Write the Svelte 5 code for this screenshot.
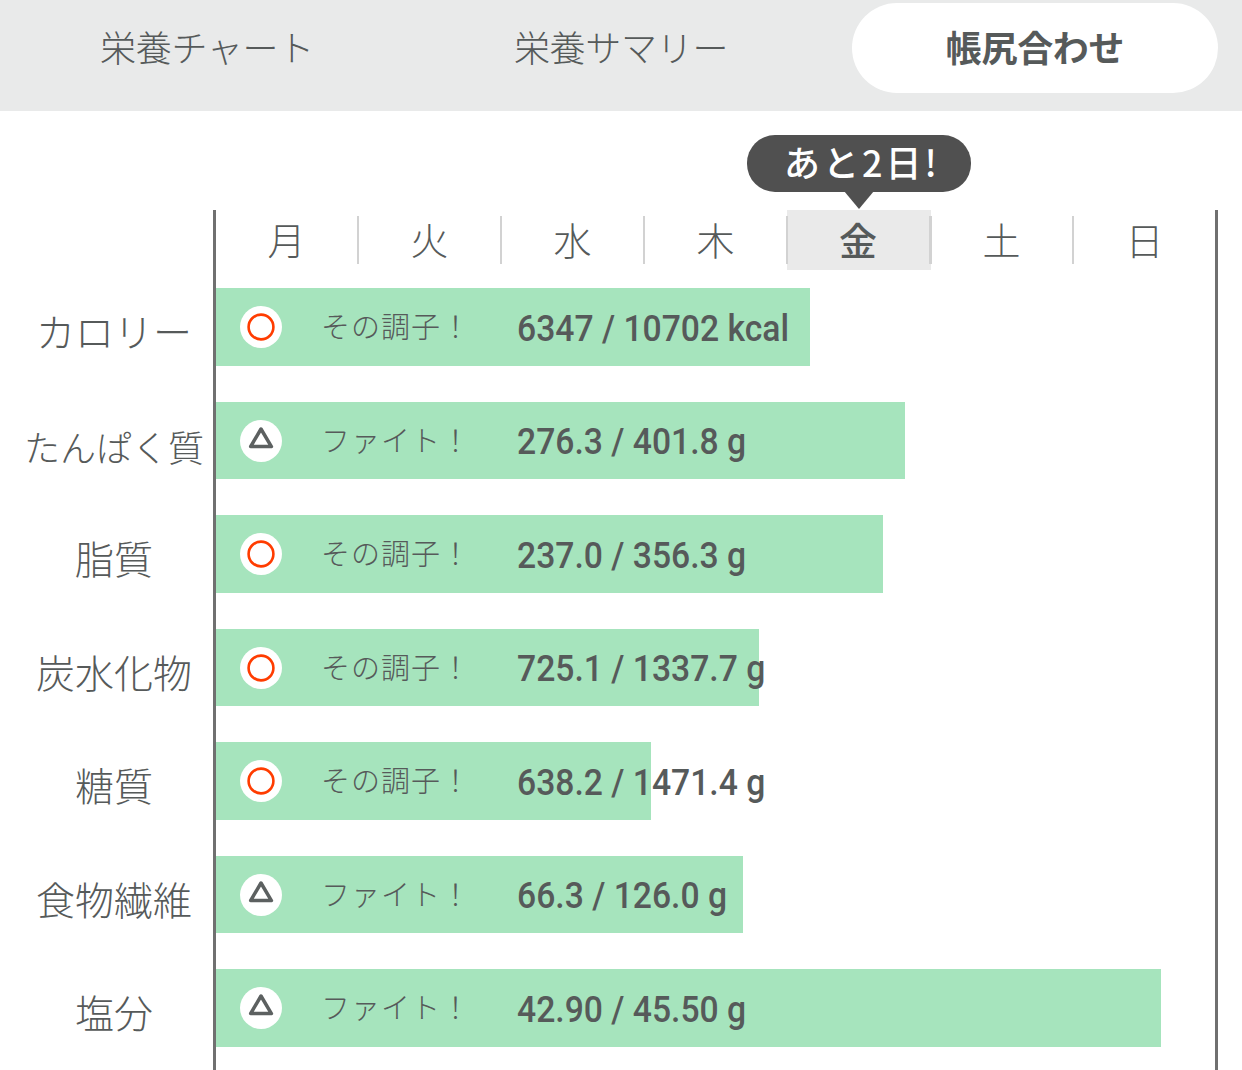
<script>
  const days = ['月', '火', '水', '木', '金', '土', '日'];
  const rows = [
    { label: 'カロリー', w: 594, ok: true, value: '6347 / 10702 kcal' },
    { label: 'たんぱく質', w: 689, ok: false, value: '276.3 / 401.8 g', small: true },
    { label: '脂質', w: 667, ok: true, value: '237.0 / 356.3 g' },
    { label: '炭水化物', w: 543, ok: true, value: '725.1 / 1337.7 g' },
    { label: '糖質', w: 435, ok: true, value: '638.2 / 1471.4 g' },
    { label: '食物繊維', w: 527, ok: false, value: '66.3 / 126.0 g' },
    { label: '塩分', w: 945, ok: false, value: '42.90 / 45.50 g' }
  ];
</script>

<div class="page">
  <nav class="tabs">
    <div class="tab">栄養チャート</div>
    <div class="tab">栄養サマリー</div>
    <div class="tab active">帳尻合わせ</div>
  </nav>

  <div class="chart">
    <div class="labels">
      {#each rows as r}
        <div class="label" class:small={r.small}>{r.label}</div>
      {/each}
    </div>
    <div class="plot">
      <div class="days">
        {#each days as d, i}
          <div class="day" class:today={i === 4} class:sep={i > 0}>
            {d}
            {#if i === 4}
              <div class="tip">あと2日!</div>
            {/if}
          </div>
        {/each}
      </div>
      <div class="bars">
        {#each rows as r}
          <div class="row">
            <div class="bar" style="width:{r.w}px"></div>
            <div class="content">
              <span class="icon">
                {#if r.ok}
                  <svg width="42" height="42" viewBox="0 0 42 42"><circle cx="21" cy="21" r="21" fill="#fff"/><circle cx="21" cy="21" r="12.4" fill="none" stroke="#ff3c00" stroke-width="2.6"/></svg>
                {:else}
                  <svg width="42" height="42" viewBox="0 0 42 42"><circle cx="21" cy="21" r="21" fill="#fff"/><path d="M21 9 L31.4 26.6 H10.6 Z" fill="none" stroke="#5c6060" stroke-width="3.5" stroke-linejoin="round"/></svg>
                {/if}
              </span>
              <span class="msg">{r.ok ? 'その調子！' : 'ファイト！'}</span>
              <span class="val">{r.value}</span>
            </div>
          </div>
        {/each}
      </div>
    </div>
  </div>
</div>

<style>
  :global(body) {
    margin: 0;
    background: #fff;
  }
  .page {
    width: 1242px;
    height: 1070px;
    overflow: hidden;
    color: #565a5a;
    font-family: "Noto Sans CJK JP", "Noto Sans", sans-serif;
    font-weight: 300;
  }
  .tabs {
    height: 111px;
    background: #e9eaea;
    display: grid;
    grid-template-columns: repeat(3, 414px);
  }
  .tab {
    margin: 3px 24px 18px;
    padding-bottom: 4px;
    display: flex;
    align-items: center;
    justify-content: center;
    font-size: 36px;
    letter-spacing: -0.3px;
    border-radius: 45px;
  }
  .active {
    background: #fff;
    font-weight: 700;
  }
  .chart {
    display: flex;
    margin-top: 99px;
  }
  .labels {
    width: 213px;
    padding-top: 78px;
    flex: none;
  }
  .label {
    box-sizing: border-box;
    height: 113.5px;
    padding-left: 15px;
    line-height: 84px;
    text-align: center;
    font-size: 39px;
    white-space: nowrap;
  }
  .label.small {
    font-size: 36px;
    line-height: 88px;
  }
  .plot {
    width: 999px;
    height: 860px;
    border-left: 3px solid #707070;
    border-right: 3px solid #707070;
  }
  .days {
    display: grid;
    grid-template-columns: repeat(7, 143px);
    height: 78px;
    align-items: start;
  }
  .day {
    position: relative;
    height: 60px;
    display: flex;
    align-items: center;
    justify-content: center;
    font-size: 38px;
    padding-right: 2px;
    padding-bottom: 4px;
    box-sizing: border-box;
  }
  .day.sep::before {
    content: "";
    position: absolute;
    left: -2px;
    top: 6px;
    height: 48px;
    border-left: 2px solid #d2d2d2;
  }
  .day.today {
    margin-left: -1px;
    background: #eaeaea;
    font-weight: 500;
  }
  .day.today::before {
    left: -1px;
  }
  .day.today::after {
    content: "";
    position: absolute;
    right: -1px;
    top: 6px;
    height: 48px;
    border-left: 2px solid #d2d2d2;
  }
  .tip {
    position: absolute;
    left: 50%;
    top: -75px;
    box-sizing: border-box;
    width: 224px;
    height: 57px;
    margin-left: -112px;
    padding-left: 6px;
    background: #505050;
    border-radius: 28px;
    color: #fff;
    font-size: 36px;
    font-weight: 500;
    letter-spacing: 3px;
    line-height: 53px;
    text-align: center;
  }
  .tip::after {
    content: "";
    position: absolute;
    left: 97px;
    top: 56px;
    border-left: 15px solid transparent;
    border-right: 15px solid transparent;
    border-top: 18px solid #505050;
  }
  .row {
    position: relative;
    height: 113.5px;
  }
  .bar {
    height: 77.5px;
    background: #a6e4bd;
  }
  .content {
    position: absolute;
    left: 0;
    top: 0;
    height: 77.5px;
    display: flex;
    align-items: center;
    white-space: nowrap;
  }
  .icon {
    width: 42px;
    height: 42px;
    margin-left: 24px;
    margin-top: 1px;
    flex: none;
    display: block;
  }
  .icon svg {
    display: block;
  }
  .msg {
    width: 195px;
    margin-left: 41px;
    font-size: 29px;
    margin-top: -3px;
    flex: none;
    letter-spacing: 1px;
    transform: translateX(-2px);
  }
  .val {
    font-family: "Roboto", "Noto Sans", sans-serif;
    font-weight: 500;
    font-size: 37px;
    transform: scaleX(0.91);
    transform-origin: left center;
    margin-left: -1px;
    margin-top: 3px;
    display: block;
  }
</style>
